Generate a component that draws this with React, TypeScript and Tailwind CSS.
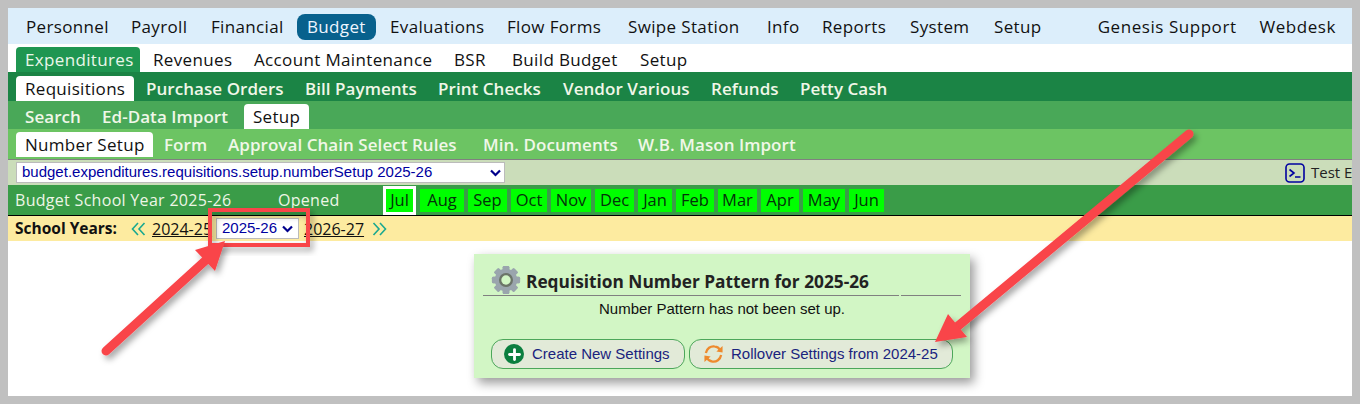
import React from 'react';
import { Plus } from 'lucide-react';

const nunito = { fontFamily: '"Open Sans", sans-serif' };
const arial = { fontFamily: '"Liberation Sans", sans-serif' };

const topNav = [
  { name: 'Personnel', cls: 'w-[105px]' },
  { name: 'Payroll', cls: 'w-[80px]' },
  { name: 'Financial', cls: 'w-[96px]' },
  { name: 'Budget', cls: 'w-[79px] mr-[4px] rounded-lg bg-[#08618d] text-[#eef6ff]' },
  { name: 'Evaluations', cls: 'w-[117px]' },
  { name: 'Flow Forms', cls: 'w-[121px]' },
  { name: 'Swipe Station', cls: 'w-[139px]' },
  { name: 'Info', cls: 'w-[55px]' },
  { name: 'Reports', cls: 'w-[88px]' },
  { name: 'System', cls: 'w-[84px]' },
  { name: 'Setup', cls: 'w-[70px]' },
];
const subNav = [
  { name: 'Expenditures', cls: 'w-[124px] pl-[9px] mr-[3px] rounded-t bg-[#1f9651] text-[#eaf7ea]' },
  { name: 'Revenues', cls: 'w-[101px] pl-[10px]' },
  { name: 'Account Maintenance', cls: 'w-[200px] pl-[10px]' },
  { name: 'BSR', cls: 'w-[58px] pl-[10px]' },
  { name: 'Build Budget', cls: 'w-[128px] pl-[10px]' },
  { name: 'Setup', cls: 'w-[70px] pl-[10px]' },
];
const thirdNav = [
  { name: 'Requisitions', cls: 'w-[118px] pl-[9px] mr-[2px] rounded-t bg-white text-[#111] font-normal tracking-[0.3px]' },
  { name: 'Purchase Orders', cls: 'w-[159px] pl-[10px]' },
  { name: 'Bill Payments', cls: 'w-[133px] pl-[10px]' },
  { name: 'Print Checks', cls: 'w-[125px] pl-[10px]' },
  { name: 'Vendor Various', cls: 'w-[148px] pl-[10px]' },
  { name: 'Refunds', cls: 'w-[89px] pl-[10px]' },
  { name: 'Petty Cash', cls: 'w-[110px] pl-[10px]' },
];
const fourthNav = [
  { name: 'Search', cls: 'w-[77px] pl-[9px]' },
  { name: 'Ed-Data Import', cls: 'w-[151px] pl-[9px]' },
  { name: 'Setup', cls: 'w-[65px] pl-[9px] rounded-t bg-white text-[#111] font-normal tracking-[0.3px]' },
];
const fifthNav = [
  { name: 'Number Setup', cls: 'w-[137px] pl-[9px] mr-[2px] rounded-t bg-white text-[#111] font-normal tracking-[0.3px]' },
  { name: 'Form', cls: 'w-[64px] pl-[9px]' },
  { name: 'Approval Chain Select Rules', cls: 'w-[255px] pl-[9px]' },
  { name: 'Min. Documents', cls: 'w-[155px] pl-[9px]' },
  { name: 'W.B. Mason Import', cls: 'w-[180px] pl-[9px]' },
];
const months = [
  { name: 'Aug', cls: 'w-[44px]' },
  { name: 'Sep', cls: 'w-[39px]' },
  { name: 'Oct', cls: 'w-[36px]' },
  { name: 'Nov', cls: 'w-[40px]' },
  { name: 'Dec', cls: 'w-[39px]' },
  { name: 'Jan', cls: 'w-[34px]' },
  { name: 'Feb', cls: 'w-[38px]' },
  { name: 'Mar', cls: 'w-[39px]' },
  { name: 'Apr', cls: 'w-[38px]' },
  { name: 'May', cls: 'w-[42px]' },
  { name: 'Jun', cls: 'w-[35px]' },
];

const Arrows = () => (
  <svg className="absolute left-0 top-0 pointer-events-none" width="1360" height="404" viewBox="0 0 1360 404">
    <defs>
      <filter id="arrowShadow" x="-20%" y="-20%" width="150%" height="150%">
        <feDropShadow dx="3" dy="4" stdDeviation="3" floodColor="#000" floodOpacity="0.35" />
      </filter>
    </defs>
    <g filter="url(#arrowShadow)">
      <rect x="210" y="210" width="98" height="35" fill="none" stroke="#f94449" strokeWidth="4" />
    </g>
    <g filter="url(#arrowShadow)">
      <path d="M106 351 L206 260" stroke="#f94449" strokeWidth="9" strokeLinecap="round" />
      <path d="M225 241 L195 250 L215 271 Z" fill="#f94449" />
    </g>
    <g filter="url(#arrowShadow)">
      <path d="M1189 134 L958 326" stroke="#f94449" strokeWidth="9" strokeLinecap="round" />
      <path d="M935 342 L948 314 L967 337 Z" fill="#f94449" />
    </g>
  </svg>
);

const RolloverIcon = () => (
  <svg width="21" height="22" viewBox="0 0 22 22" fill="none">
    <path d="M3 10 C4 5 8 2.5 12 3 C15 3.3 17 5 18 7" stroke="#ee8a2d" strokeWidth="2.4" />
    <path d="M20.5 2.5 L20.5 9.5 L14 8.5 Z" fill="#ee8a2d" />
    <path d="M19 12 C18 17 14 19.5 10 19 C7 18.7 5 17 4 15" stroke="#ee8a2d" strokeWidth="2.4" />
    <path d="M1.5 19.5 L1.5 12.5 L8 13.5 Z" fill="#ee8a2d" />
  </svg>
);

const GearIcon = () => (
  <svg width="30" height="30" viewBox="0 0 32 32" className="shrink-0">
    <g fill="#9aa5ad">
      {[0, 45, 90, 135, 180, 225, 270, 315].map(a => (
        <rect key={a} x="12.5" y="1" width="7" height="30" rx="1.5" transform={`rotate(${a} 16 16)`} />
      ))}
      <circle cx="16" cy="16" r="12" />
    </g>
    <circle cx="16" cy="16" r="7.5" fill="#6b7468" />
    <circle cx="16" cy="16" r="5" fill="#d2f6c5" />
  </svg>
);

const Chevron = () => (
  <svg width="11" height="8" viewBox="0 0 11 8" fill="none" stroke="#00008b" strokeWidth="2.2"><path d="M1 1.5 L5.5 6 L10 1.5" /></svg>
);

const DoubleChevron = ({ flip }: { flip?: boolean }) => (
  <svg width="15" height="14" viewBox="0 0 15 14" fill="none" stroke="#1aa890" strokeWidth="1.6" className={flip ? 'rotate-180' : ''}>
    <path d="M7 1 L1.5 7 L7 13 M13.5 1 L8 7 L13.5 13" />
  </svg>
);

export default function App() {
  return (
    <div className="relative w-[1360px] h-[404px] overflow-hidden bg-[#c0c0c0] p-2">
      <div className="w-[1344px] h-[388px] bg-white overflow-hidden relative flex flex-col">
        <div className="h-9 shrink-0 bg-[#dceefb] flex items-center pl-2 text-[17px] tracking-[0.35px] text-[#111]" style={nunito}>
          {topNav.map(t => (
            <span key={t.name} className={`${t.cls} h-[26px] mt-[2px] pl-[10px] flex items-center whitespace-nowrap`}>{t.name}</span>
          ))}
          <div className="ml-auto flex mt-[2px] mr-[16px] gap-[23px] tracking-[0.55px]">
            <span>Genesis Support</span>
            <span>Webdesk</span>
          </div>
        </div>

        <div className="h-7 shrink-0 flex items-end pl-2 text-[17px] tracking-[0.35px] text-[#111]" style={nunito}>
          {subNav.map(t => (
            <span key={t.name} className={`${t.cls} h-[25px] flex items-center whitespace-nowrap`}>{t.name}</span>
          ))}
        </div>

        <div className="h-[29px] shrink-0 bg-[#1b8445] flex items-end pl-2 text-[17px] tracking-[0.05px] text-[#f0f7e8] font-semibold" style={nunito}>
          {thirdNav.map(t => (
            <span key={t.name} className={`${t.cls} h-[25px] flex items-center whitespace-nowrap`}>{t.name}</span>
          ))}
        </div>

        <div className="h-7 shrink-0 bg-[#49a858] flex items-end pl-2 text-[17px] tracking-[0.05px] text-[#f0f7e8] font-semibold" style={nunito}>
          {fourthNav.map(t => (
            <span key={t.name} className={`${t.cls} h-[25px] flex items-center whitespace-nowrap`}>{t.name}</span>
          ))}
        </div>

        <div className="h-[30px] shrink-0 bg-[#6cc463] flex items-center pt-px pl-2 text-[17px] tracking-[0.05px] text-[#f0f7e8] font-semibold" style={nunito}>
          {fifthNav.map(t => (
            <span key={t.name} className={`${t.cls} h-[25px] flex items-center whitespace-nowrap`}>{t.name}</span>
          ))}
        </div>

        <div className="h-[26px] shrink-0 bg-[#cbddba] border-t border-[#808080] flex items-center pl-2 relative">
          <div className="w-[489px] h-[21px] bg-white border border-[#bbb] flex items-center justify-between pl-[5px] pr-[3px] text-[15px] text-[#0000a0]" style={arial}>
            <span>budget.expenditures.requisitions.setup.numberSetup 2025-26</span>
            <Chevron />
          </div>
          <div className="ml-auto flex items-center gap-[6px] text-[15px] text-[#222] w-[67px] shrink-0 overflow-hidden whitespace-nowrap" style={nunito}>
            <svg width="20" height="20" viewBox="0 0 20 20" className="shrink-0" fill="none" stroke="#0000a0" strokeWidth="1.6">
              <rect x="1" y="1" width="18" height="18" rx="3.5" />
              <path d="M4.5 6.5 L9 10 L4.5 13.5 M10 14 H15.5" />
            </svg>
            <span>Test Env</span>
          </div>
        </div>

        <div className="h-[31px] shrink-0 bg-[#3a9c48] border-b border-black flex items-center pl-[7px] text-[16px] tracking-[0.3px] text-[#eef6e6]" style={nunito}>
          <span className="w-[263px]">Budget School Year 2025-26</span>
          <span className="w-[105px]">Opened</span>
          <div className="flex items-center gap-1 text-[16.5px] tracking-normal text-[#04310a]">
            <span className="w-[33px] h-[29px] flex items-center justify-center border-[3px] border-white bg-[#00ff00]">Jul</span>
            {months.map(m => (
              <span key={m.name} className={`${m.cls} h-[23px] flex items-center justify-center bg-[#00ff00]`}>{m.name}</span>
            ))}
          </div>
        </div>

        <div className="h-[25px] shrink-0 bg-[#fdeba0] flex items-center pl-[7px] text-[16px] text-[#111]" style={nunito}>
          <span className="font-bold text-[15.5px] w-[116px]">School Years:</span>
          <span className="mr-[6px] flex"><DoubleChevron /></span>
          <span className="underline w-[64px] overflow-hidden whitespace-nowrap">2024-25</span>
          <div className="w-[83px] h-[21px] bg-white border border-[#bbb] flex items-center justify-between pl-[5px] pr-[5px] text-[15px] text-[#0000a0]" style={arial}>
            <span>2025-26</span>
            <Chevron />
          </div>
          <span className="underline ml-[5px]">2026-27</span>
          <span className="ml-[8px] flex"><DoubleChevron flip /></span>
        </div>

        <div className="flex-1 pl-[466px] pt-[13px]">
          <div className="w-[496px] h-[124px] bg-[#d2f6c5] shadow-[4px_5px_10px_rgba(0,0,0,0.4)] px-[9px]">
            <div className="flex items-end h-[41px] pl-[8px] gap-[5px] text-[#222]">
              <GearIcon />
              <span className="font-bold text-[17.3px] leading-[24px] pb-[1px]" style={nunito}>Requisition Number Pattern for 2025-26</span>
            </div>
            <div className="flex gap-[2px]">
              <div className="w-[416px] h-px bg-[#808080]" />
              <div className="w-[60px] h-px bg-[#808080]" />
            </div>
            <p className="text-center text-[15px] leading-[18px] text-[#111] mt-[4px]" style={arial}>Number Pattern has not been set up.</p>
            <div className="flex gap-1 mt-[21px] pl-[8px] text-[15px] text-[#1a237e]" style={arial}>
              <div className="w-[194px] h-[30px] rounded-xl border border-[#4ca75a] bg-[#e2ead8] flex items-center pl-[12px] gap-[8px]">
                <span className="w-5 h-5 rounded-full bg-[#0b7f3f] flex items-center justify-center"><Plus size={17} color="#fff" strokeWidth={4} /></span>
                <span>Create New Settings</span>
              </div>
              <div className="w-[264px] h-[30px] rounded-xl border border-[#4ca75a] bg-[#e2ead8] flex items-center pl-[13px] gap-[7px]">
                <RolloverIcon />
                <span>Rollover Settings from 2024-25</span>
              </div>
            </div>
          </div>
        </div>
      </div>
      <Arrows />
    </div>
  );
}
